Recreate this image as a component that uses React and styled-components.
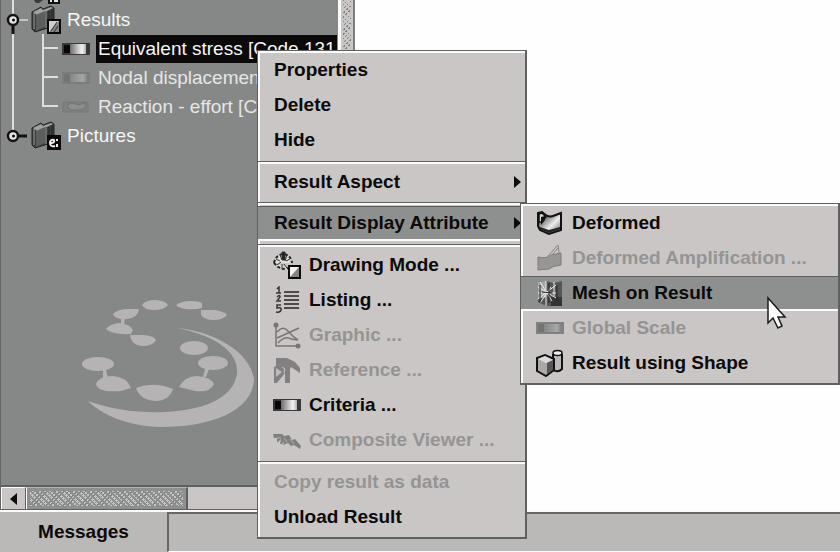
import React from "react";
import styled, { createGlobalStyle, css } from "styled-components";

const c = {
  face: "#c9c6c5",
  bar: "#bab9b8",
  tree: "#868887",
  line: "#5f6160",
  light: "#fbfbfb",
  active: "#8e908f",
  ink: "#0c0a0a",
  muted: "#969493",
};

const GlobalStyle = createGlobalStyle`
  * { box-sizing: border-box; }
  body { margin: 0; background: #fefefe; }
  ul { list-style: none; margin: 0; padding: 0; }
  button { font: inherit; color: inherit; border: 0; padding: 0; background: none; }
  svg { display: block; flex: none; }
`;

const Page = styled.div`
  position: relative;
  display: flex;
  flex-direction: column;
  height: 100vh;
  overflow: hidden;
  font-family: "Liberation Sans", Arial, sans-serif;
  font-size: 19px;
  line-height: 22px;
  color: ${c.ink};
`;

const Workspace = styled.main`
  flex: 1;
  min-height: 0;
  display: flex;
`;

const TreePanel = styled.section`
  width: 338px;
  flex: none;
  display: flex;
  flex-direction: column;
  background: ${c.tree};
  border-left: 1px solid #636564;
`;

const TreeRow = styled.li`
  display: flex;
  align-items: ${(p) => (p.$clipped ? "flex-end" : "center")};
  height: ${(p) => (p.$clipped ? "5px" : "29px")};
  padding-right: 1px;
  overflow: hidden;
`;

const TreeLabel = styled.button`
  flex: ${(p) => (p.$selected ? "1" : "none")};
  height: 28px;
  padding: 0 2px;
  margin-left: ${(p) => (p.$child ? "6px" : "3px")};
  text-align: left;
  white-space: nowrap;
  overflow: hidden;
  color: ${(p) => (p.$dim ? "#e6e6e6" : "#f6f6f6")};
  background: ${(p) => (p.$selected ? "#0b090a" : "transparent")};
`;

const LogoArea = styled.div`
  flex: 1;
  display: flex;
  align-items: flex-end;
  padding: 0 0 55px 69px;
`;

const knurl = (base) => css`
  background: repeating-linear-gradient(
      45deg,
      transparent 0 2px,
      ${base} 2px 4px
    ),
    repeating-linear-gradient(135deg, #7f8180 0 1px, #c6c6c5 1px 3px);
`;

const ScrollBar = styled.div`
  display: flex;
  height: 25px;
  background: ${c.face};
  border-top: 2px solid ${c.line};
  border-bottom: 1px solid ${c.line};
`;

const ScrollButton = styled.button`
  width: 25px;
  display: grid;
  place-items: center;
  border-left: 1px solid ${c.light};
  border-top: 1px solid ${c.light};
  border-right: 1px solid ${c.line};
`;

const Thumb = styled.div`
  width: 162px;
  padding: 3px;
  border-left: 1px solid ${c.light};
  border-top: 1px solid #b4b4b3;
  border-right: 2px solid ${c.line};
  background: ${c.active};
`;

const Grip = styled.div`
  height: 100%;
  ${knurl("#8e908f")}
`;

const Splitter = styled.div`
  width: 17px;
  flex: none;
  padding: 0 2px;
  border-left: 3px solid ${c.light};
  border-right: 2px solid #7c7d7c;
  background: ${c.face};
`;

const SplitGrip = styled.div`
  width: 8px;
  height: 100%;
  ${knurl("#c9c6c5")}
`;

const Canvas = styled.section`
  flex: 1;
  background: #fefefe;
`;

const Footer = styled.footer`
  display: flex;
  height: 42px;
  flex: none;
  background: ${c.bar};
`;

const Tab = styled.button`
  width: 167px;
  font-weight: 700;
  border-top: 2px solid ${c.light};
`;

const MessageStrip = styled.div`
  flex: 1;
  border-top: 2px solid #666867;
  border-left: 2px solid #666867;
  border-bottom: 1px solid ${c.light};
  margin-top: 2px;
  box-shadow: 0 -2px 0 ${c.light};
`;

const Popup = styled.div`
  position: absolute;
  top: ${(p) => p.$top}px;
  left: ${(p) => p.$left}px;
  width: ${(p) => p.$width}px;
  padding: 2px 0;
  background: ${c.face};
  border: 1px solid ${c.line};
  border-right-width: 2px;
  border-bottom-width: 2px;
  box-shadow: inset 2px 2px 0 ${c.light};
  font-weight: 700;
`;

const Item = styled.button`
  display: flex;
  align-items: center;
  gap: 8px;
  width: 100%;
  height: 35px;
  padding: 0 3px 0 ${(p) => (p.$inset ? "15px" : "16px")};
  border-top: 1px solid transparent;
  border-bottom: 2px solid transparent;
  text-align: left;
  white-space: nowrap;
  &:disabled { color: ${c.muted}; }
  ${(p) =>
    p.$active &&
    css`
      background: ${c.active};
      border-top-color: ${c.line};
      border-bottom-color: ${c.light};
    `}
`;

const ItemText = styled.span`
  flex: 1;
`;

const Separator = styled.hr`
  height: 3px;
  margin: ${(p) => (p.$tight ? "2px 0 1px" : "3px 0 1px")};
  border: 0;
  border-top: 1px solid ${c.line};
  background: ${c.light};
`;

const Pointer = styled.div`
  position: absolute;
  left: 767px;
  top: 296px;
  pointer-events: none;
`;

const Svg = ({ w = 28, h = 28, children }) => (
  <svg width={w} height={h} viewBox={`0 0 ${w} ${h}`} aria-hidden="true">
    {children}
  </svg>
);

const Arrow = () => (
  <Svg w={8} h={14}>
    <path d="M0 1 7 7 0 13Z" fill={c.ink} />
  </Svg>
);

const Gradient = ({ id, dim }) => (
  <linearGradient id={id}>
    <stop offset="0" stopColor={dim ? "#858786" : "#6c6c6c"} />
    <stop offset="0.75" stopColor={dim ? "#a5a7a6" : "#f4f4f4"} />
    <stop offset="1" stopColor={dim ? "#858786" : "#b0b0b0"} />
  </linearGradient>
);

const ScaleIcon = ({ id }) => (
  <Svg>
    <defs><Gradient id={id} /></defs>
    <path d="M0 8h28v12H0z" fill="#3a3839" />
    <path d="M2 10h6v8H2z" fill="#080607" />
    <path d="M8 9h16v10H8z" fill={`url(#${id})`} />
  </Svg>
);

const DimScaleIcon = ({ id, tree }) => (
  <Svg>
    <defs><Gradient id={id} dim /></defs>
    <path d="M0 8h28v12H0z" fill={tree ? "#7b7d7c" : "#7f8080"} />
    <path d="M2 10h6v8H2z" fill="#727473" />
    <path d="M8 10h17v8H8z" fill={`url(#${id})`} />
  </Svg>
);

const DimShapeIcon = () => (
  <Svg>
    <path d="M1 9h25v10H1z" fill="#7f8180" stroke="#777978" />
    <path d="M5 12q5-3 9-1t8-1l2 3-4 4H8z" fill="#8c8e8d" stroke="#737574" />
  </Svg>
);

const RootGuide = ({ open, last }) => (
  <Svg w={30} h={29}>
    <path d={last ? "M12 0v14" : "M12 0v29"} stroke="#dededd" strokeWidth="2" />
    <path d={open ? "M18 15h9" : "M17 15h9"} stroke={open ? "#c3c4c3" : "#111"} strokeWidth={open ? 2 : 3} />
    {open && <path d="M12 19v12" stroke="#111" strokeWidth="3" />}
    <circle cx="12" cy="15" r="5" fill="#e6e6e6" stroke="#141213" strokeWidth="2.5" />
    <circle cx="12.500" cy="15" r="1.500" fill="#111" />
  </Svg>
);

const ChildGuide = ({ last }) => (
  <Svg w={61} h={29}>
    <path d="M12 0v29" stroke="#dededd" strokeWidth="2" />
    <path d={last ? "M42 0v14h15" : "M42 0v29M42 14h15"} fill="none" stroke="#dededd" strokeWidth="2" />
  </Svg>
);

const FolderIcon = ({ kind }) => (
  <Svg w={31} h={29}>
    <path d="M1 7 10 2l2 2 8-3 3 2v18L4 27 1 24Z" fill="#3d3e3e" stroke="#222" />
    <path d="M2 7 10 3l2 2 8-3 2 1-8 4-8 3Z" fill="#a0a1a0" />
    <path d="M5 10 14 6v16l-9 4Z" fill="#5c5d5d" />
    <path d="M3 8v16M15 7v16" stroke="#999a9a" />
    <path d="M18 6v12M21 4v12" stroke="#252425" />
    <path d="M17 15h12v13H17z" fill={kind === "picture" ? "#090708" : "#cfcfce"} stroke="#0a0809" strokeWidth="2" />
    {kind === "picture" ? (
      <path d="M20 22q4 0 3-3-4-1-4 3t5 3M26 18v2M26 23v3" fill="none" stroke="#eee" strokeWidth="2" />
    ) : (
      <g>
        <path d="M18 27 28 16v11Z" fill="#848585" />
        <path d="M20 26 26 17M23 27l4-6" stroke="#333" />
      </g>
    )}
  </Svg>
);

const ClippedIcon = () => (
  <Svg w={31} h={5}>
    <path d="M3 0h9L8 3H5Z" fill="#3a3a3a" />
    <path d="M17 0h12v4H17z" fill="#111" />
    <path d="M19 0h2v2h-2zM23 0h4v2h-4z" fill="#e4e4e4" />
  </Svg>
);

const Logo = () => (
  <svg width="195" height="140" viewBox="0 0 195 140" role="img" aria-label="Logo" fill="#b5b3b3">
    <path d="M43 24Q48 19 58 19H69Q68 28 57 29H51Q44 28 43 24Z" />
    <path d="M72 15Q75 10 86 10 96 11 98 15 94 20 84 20 74 20 72 15Z" />
    <path d="M106 15Q112 11 120 11 132 11 132 14V18Q124 20 116 19 109 18 106 15Z" />
    <path d="M131 20H145Q155 22 157 25 153 30 144 30 134 30 131 25Z" />
    <path d="M36 39Q40 34 49 33 60 34 63 40L61 44Q42 45 36 39Z" />
    <path d="M60 45H74Q84 46 86 50 83 56 72 56 61 55 60 45Z" />
    <ellipse cx="124" cy="58" rx="14" ry="7" />
    <ellipse cx="143" cy="73" rx="15" ry="7" />
    <ellipse cx="28" cy="74" rx="16" ry="7" />
    <path d="M26 94Q29 86 43 86 57 87 61 98L51 101Q28 103 26 94Z" />
    <path d="M66 98Q84 91 103 99 99 111 85 111 70 110 66 98Z" />
    <path d="M109 97Q115 86 127 86 141 87 144 94 140 103 125 101Z" />
    <path d="M51 29h4l-1 5h-3ZM33 80h3l2 8h-5ZM135 79h4l-3 8h-3Z" />
    <path d="M107 38C142 41 180 61 184 89 183 122 139 137 91 137 57 136 32 125 18 111 43 120 68 123 95 122 135 120 163 108 167 84 169 61 145 46 107 38Z" />
  </svg>
);

const DrawingIcon = () => (
  <Svg>
    <path d="M1 12Q3 4 10 3q8 1 9 9M1 12l4 4 5 2 5-1" fill="#e1dfde" stroke="#222" strokeWidth="2" strokeDasharray="3 2" />
    <path d="M9 1h3v8H9zM3 8l4 2M17 8l-4 2M7 4l2 5M14 4l-2 6" stroke="#333" fill="#222" />
    <path d="M4 14l4-3M9 18v-5M14 17l-3-4" stroke="#333" />
    <path d="M16 15h11v12H16z" fill="#f5f4f4" stroke="#0b090a" strokeWidth="2" />
    <path d="M17 26 26 16v10Z" fill="#858383" />
  </Svg>
);

const ListingIcon = () => (
  <Svg>
    <path d="M4 3 6 1v6M3 7h5M4 11q3-3 3 0l-3 4h4M8 19H4v3q5-1 4 2t-5 2" fill="none" stroke="#383637" strokeWidth="1.500" />
    <path d="M11 6h15M11 10h15M11 14h15M11 18h15M11 22h15" stroke="#4c4a4b" strokeWidth="2" />
  </Svg>
);

const GraphicIcon = () => (
  <Svg>
    <g fill="none" stroke="#777576" strokeWidth="1.500">
      <path d="M3 3v22h23M4 11Q10 4 15 10T25 19M4 17 26 7M5 22q7-8 13-4l7 1" />
    </g>
    <circle cx="3" cy="4" r="2.500" fill="#777576" />
    <circle cx="25" cy="25" r="2.500" fill="#777576" />
  </Svg>
);

const ReferenceIcon = () => (
  <Svg>
    <path d="M3 2h11l8 4 5 6v5l-9-6-1 2v14h-5V17L4 27H1V11l2-1Z" fill="#828080" />
    <path d="M3 12v9l6-5Z" fill="#bdbaba" />
    <path d="M9 11l3 2-1 4" stroke="#c9c6c5" fill="none" />
  </Svg>
);

const CompositeIcon = () => (
  <Svg>
    <path d="M0 8h9l2 2 5-1 3 5 3-1 6 7-1 3-6-4-3 1-3-3-5 2 1-4-2 3H7l1-5-3 3H4v-4H1Z" fill="#827f80" />
    <path d="M3 12h5M11 12l3 4M17 13l4 5" stroke="#b4b1b1" />
  </Svg>
);

const DeformedIcon = ({ id }) => (
  <Svg>
    <defs>
      <linearGradient id={id} x2="1" y2="1">
        <stop offset="0.200" stopColor="#555" /><stop offset="0.600" stopColor="#eee" /><stop offset="1" stopColor="#555" />
      </linearGradient>
    </defs>
    <path d="M2 4 6 3q6 6 11 4l8-3v17l-12 4-9-4-2-4Z" fill={`url(#${id})`} stroke="#111" strokeWidth="2" />
    <path d="M3 5 6 4l4 4-5 5H3Z" fill="#d8d7d7" stroke="#111" strokeWidth="1.500" />
    <path d="M5 8l4-1v4l-4 5Z" fill="#111" />
    <path d="M4 20l9 4 11-4v-2l-11 3-9-3Z" fill="#252424" />
  </Svg>
);

const AmplifyIcon = () => (
  <Svg>
    <path d="M2 13q9 2 13-2l10-2v12q-9 1-12 4L2 26Z" fill="#989595" stroke="#7e7c7c" />
    <path d="M12 12 22 1l1 8M16 11l6-7" fill="none" stroke="#858383" />
  </Svg>
);

const MeshIcon = () => (
  <Svg>
    <path d="M2 3 10 2l8 2 8-2v25H10L2 23Z" fill="#555656" />
    <path d="M2 3l8-1v16l-8 2Z" fill="#a7a7a6" />
    <path d="M15 18h11v9H15z" fill="#333" />
    <path d="M2 8 20 19M2 20 20 6M10 2v25M4 3l12 19M2 14h18M18 3v14M4 24 15 8" stroke="#ecebeb" fill="none" />
    <path d="M4 6v18M13 4v20M6 13l10 1M21 6v16" stroke="#242424" />
  </Svg>
);

const ShapeIcon = () => (
  <Svg>
    <path d="M17 5v16q5 3 9-1V5" fill="#bab8b8" stroke="#111" strokeWidth="2" />
    <ellipse cx="21.500" cy="4" rx="4.500" ry="2.500" fill="#eee" stroke="#111" strokeWidth="1.500" />
    <path d="M1 9l8-3 9 4v11l-8 6-9-5Z" fill="#aaa8a8" stroke="#111" strokeWidth="2" />
    <path d="M2 10l7-3 8 4-7 3Z" fill="#dddbdb" />
    <path d="M11 14l6-3v10l-6 4Z" fill="#575555" />
  </Svg>
);

const menu = [
  { text: "Properties" },
  { text: "Delete" },
  { text: "Hide" },
  { rule: 1 },
  { text: "Result Aspect", sub: true },
  { rule: 2, tight: true },
  { text: "Result Display Attribute", sub: true, active: true },
  { rule: 3 },
  { text: "Drawing Mode ...", icon: <DrawingIcon /> },
  { text: "Listing ...", icon: <ListingIcon /> },
  { text: "Graphic ...", icon: <GraphicIcon />, off: true },
  { text: "Reference ...", icon: <ReferenceIcon />, off: true },
  { text: "Criteria ...", icon: <ScaleIcon id="criteria" /> },
  { text: "Composite Viewer ...", icon: <CompositeIcon />, off: true },
  { rule: 4 },
  { text: "Copy result as data", off: true },
  { text: "Unload Result" },
];

const submenu = [
  { text: "Deformed", icon: <DeformedIcon id="deformed" /> },
  { text: "Deformed Amplification ...", icon: <AmplifyIcon />, off: true },
  { text: "Mesh on Result", icon: <MeshIcon />, active: true },
  { text: "Global Scale", icon: <DimScaleIcon id="global" />, off: true },
  { text: "Result using Shape", icon: <ShapeIcon /> },
];

const Menu = ({ items, label, ...place }) => (
  <Popup role="menu" aria-label={label} {...place}>
    {items.map((it) =>
      it.rule ? (
        <Separator key={it.rule} $tight={it.tight} />
      ) : (
        <Item
          key={it.text}
          role="menuitem"
          disabled={it.off}
          $active={it.active}
          $inset={Boolean(it.icon)}
          aria-haspopup={it.sub ? "menu" : undefined}
        >
          {it.icon}
          <ItemText>{it.text}</ItemText>
          {it.sub && <Arrow />}
        </Item>
      )
    )}
  </Popup>
);

export default function App() {
  return (
    <Page>
      <GlobalStyle />
      <Workspace>
        <TreePanel aria-label="Study tree">
          <ul>
            <TreeRow $clipped>
              <Svg w={30} h={5}><path d="M12 0v5" stroke="#dededd" strokeWidth="2" /></Svg>
              <ClippedIcon />
            </TreeRow>
            <TreeRow>
              <RootGuide open />
              <FolderIcon kind="result" />
              <TreeLabel>Results</TreeLabel>
            </TreeRow>
            <TreeRow>
              <ChildGuide />
              <ScaleIcon id="stress" />
              <TreeLabel $child $selected>Equivalent stress [Code 131</TreeLabel>
            </TreeRow>
            <TreeRow>
              <ChildGuide />
              <DimScaleIcon id="nodal" tree />
              <TreeLabel $child $dim>Nodal displacemen</TreeLabel>
            </TreeRow>
            <TreeRow>
              <ChildGuide last />
              <DimShapeIcon />
              <TreeLabel $child $dim>Reaction - effort [Co</TreeLabel>
            </TreeRow>
            <TreeRow>
              <RootGuide last />
              <FolderIcon kind="picture" />
              <TreeLabel>Pictures</TreeLabel>
            </TreeRow>
          </ul>
          <LogoArea><Logo /></LogoArea>
          <ScrollBar>
            <ScrollButton aria-label="Scroll left">
              <Svg w={8} h={14}><path d="M7 1 0 7l7 6Z" fill={c.ink} /></Svg>
            </ScrollButton>
            <Thumb><Grip /></Thumb>
          </ScrollBar>
        </TreePanel>
        <Splitter><SplitGrip /></Splitter>
        <Canvas aria-label="View" />
      </Workspace>
      <Footer>
        <Tab>Messages</Tab>
        <MessageStrip />
      </Footer>
      <Menu items={menu} label="Result" $top={50} $left={257} $width={270} />
      <Menu items={submenu} label="Result display attribute" $top={203} $left={520} $width={320} />
      <Pointer>
        <Svg w={20} h={34}>
          <path d="M1 2v25l5-5 5 10 4-2-4-9h7Z" fill="#fff" stroke="#1b1a1b" strokeWidth="1.500" />
        </Svg>
      </Pointer>
    </Page>
  );
}
